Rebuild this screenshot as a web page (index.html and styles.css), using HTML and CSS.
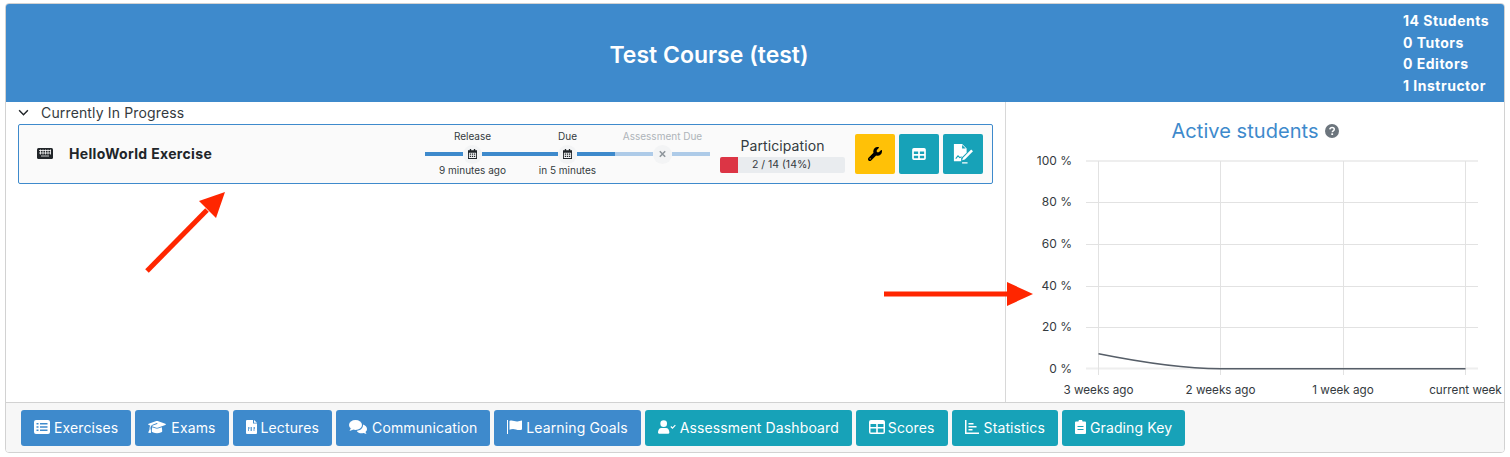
FILE: index.html
```html
<!DOCTYPE html>
<html lang="en">
<head>
    <meta charset="UTF-8">
    <title>Test Course (test)</title>
    <link rel="stylesheet" href="styles.css">
</head>
<body>

    <div class="course-card">
        <div class="course-header">
            <h1 class="course-title">Test Course (test)</h1>
            <div class="course-counts">
                <div>14 Students</div>
                <div>0 Tutors</div>
                <div>0 Editors</div>
                <div>1 Instructor</div>
            </div>
        </div>

        <div class="course-body">
            <div class="exercise-col">
                <div class="section-head">
                    <svg class="chevron" viewBox="0 0 12 8"><path d="M1 1.5l5 5 5-5" fill="none" stroke="#212529" stroke-width="1.7"/></svg>
                    <span>Currently In Progress</span>
                </div>
                <div class="exercise-row">
                    <svg class="keyboard" viewBox="0 0 16 11">
                        <rect x="0" y="0" width="16" height="11" rx="1.5" fill="#212529"/>
                        <path d="M2 2.5h12M2 5h12M4 8h8M3.5 1.5v5M6 1.5v5M8.5 1.5v5M11 1.5v5M13.5 1.5v5" stroke="#fafafa" stroke-width=".8"/>
                    </svg>
                    <div class="exercise-name">HelloWorld Exercise</div>

                    <div class="timeline">
                        <div class="tl-labels">
                            <span class="tl-cell">Release</span>
                            <span class="tl-cell">Due</span>
                            <span class="tl-cell muted">Assessment Due</span>
                        </div>
                        <div class="tl-track">
                            <span class="tl-seg done first"></span>
                            <span class="tl-dot"><svg viewBox="0 0 10 11"><path d="M2 0h1.5v1.2h3V0H8v1.2h2V11H0V1.2h2zM1 4v6h8V4zM2 5h1.4v1.2H2zM4.300 5h1.400v1.200H4.300zM6.600 5H8v1.200H6.600zM2 7.500h1.400v1.200H2zM4.300 7.500h1.400v1.200H4.300zM6.600 7.500H8v1.200H6.600z" fill="#212529" fill-rule="evenodd"/></svg></span>
                            <span class="tl-seg done middle"></span>
                            <span class="tl-dot"><svg viewBox="0 0 10 11"><path d="M2 0h1.5v1.2h3V0H8v1.2h2V11H0V1.2h2zM1 4v6h8V4zM2 5h1.400v1.200H2zM4.300 5h1.400v1.200H4.300zM6.600 5H8v1.200H6.600zM2 7.500h1.400v1.200H2zM4.300 7.500h1.400v1.200H4.300zM6.600 7.500H8v1.200H6.600z" fill="#212529" fill-rule="evenodd"/></svg></span>
                            <span class="tl-seg split"></span>
                            <span class="tl-dot"><svg viewBox="0 0 10 10"><path d="M2 2l6 6M8 2l-6 6" stroke="#8f969c" stroke-width="1.800"/></svg></span>
                            <span class="tl-seg faded last"></span>
                        </div>
                        <div class="tl-labels">
                            <span class="tl-cell">9 minutes ago</span>
                            <span class="tl-cell">in 5 minutes</span>
                            <span class="tl-cell"></span>
                        </div>
                    </div>

                    <div class="participation">
                        <div class="part-title">Participation</div>
                        <div class="part-bar">
                            <div class="part-fill"></div>
                            <div class="part-text">2 / 14 (14%)</div>
                        </div>
                    </div>

                    <div class="row-actions">
                        <a class="square-btn yellow"><svg viewBox="0 0 512 512" class="ic-wrench"><path fill="#000" d="M352 320c88.400 0 160-71.600 160-160c0-15.300-2.200-30.100-6.200-44.200c-3.100-10.800-16.400-13.200-24.300-5.300l-76.800 76.800c-3 3-7.100 4.700-11.300 4.700H336c-8.800 0-16-7.200-16-16V118.600c0-4.200 1.700-8.300 4.700-11.300l76.800-76.800c7.900-7.900 5.400-21.200-5.300-24.300C382.100 2.200 367.300 0 352 0C263.600 0 192 71.600 192 160c0 19.100 3.400 37.500 9.500 54.500L19.900 396.100C7.200 408.800 0 426.100 0 444.100C0 481.600 30.400 512 67.900 512c18 0 35.300-7.200 48-19.900L297.500 310.500c17 6.200 35.400 9.500 54.500 9.500zM80 408a24 24 0 1 1 0 48 24 24 0 1 1 0-48z" fill-rule="evenodd"/></svg></a>
                        <a class="square-btn teal"><svg viewBox="0 0 16 14" class="ic-table"><path fill="#fff" fill-rule="evenodd" d="M2 0h12a2 2 0 0 1 2 2v10a2 2 0 0 1-2 2H2a2 2 0 0 1-2-2V2a2 2 0 0 1 2-2zM2 4v3h5V4zM9 4v3h5V4zM2 9v3h5V9zM9 9v3h5V9z"/></svg></a>
                        <a class="square-btn teal"><svg viewBox="0 0 22 22" class="ic-grade"><path fill="#fff" d="M1 0h9l5 5v4.500L9 15.500V19H1zM10 1v4h4z"/><path fill="#fff" d="M20 6l2 2-9 9-3 1 1-3z"/><path fill="none" stroke="#17a2b8" stroke-width="1.200" d="M3 16l2.500-3 2 2 2-1"/><path fill="#fff" d="M10 20h6v1.500H10z"/></svg></a>
                    </div>
                </div>
            </div>

            <div class="chart-col">
                <div class="chart-title">
                    <span>Active students</span>
                    <svg class="help" viewBox="0 0 14 14"><circle cx="7" cy="7" r="7" fill="#6c757d"/><path d="M4.800 5.400C5 4 6 3.400 7.100 3.400c1.300 0 2.200.8 2.200 1.900 0 1.700-2 1.600-2 3" fill="none" stroke="#fff" stroke-width="1.500"/><rect x="6.300" y="9.300" width="1.800" height="1.700" fill="#fff"/></svg>
                </div>
                <svg class="chart" width="499" height="253" viewBox="1006 150 499 253">
                    <g stroke="#e2e2e2" stroke-width="1">
                        <path d="M1086 161H1478" stroke-width="2" stroke="#eeeeee"/>
                        <path d="M1086 202.500H1478M1086 244.500H1478M1086 286.500H1478M1086 327.500H1478"/>
                        <path d="M1086 368.500H1478" stroke-width="2" stroke="#eeeeee"/>
                        <path d="M1098.500 161V375M1220.500 161V375M1343.500 161V375M1465.500 161V375"/>
                    </g>
                    <path d="M1098.500 353.700C1140 362 1180 368.500 1220.500 368.800H1465.500" fill="none" stroke="#565e68" stroke-width="1.500"/>
                    <g class="chart-y" text-anchor="end">
                        <text x="1072" y="165">100 %</text>
                        <text x="1072" y="206">80 %</text>
                        <text x="1072" y="248">60 %</text>
                        <text x="1072" y="290">40 %</text>
                        <text x="1072" y="331">20 %</text>
                        <text x="1072" y="373">0 %</text>
                    </g>
                    <g class="chart-x" text-anchor="middle">
                        <text x="1098.500" y="394">3 weeks ago</text>
                        <text x="1220.500" y="394">2 weeks ago</text>
                        <text x="1343" y="394">1 week ago</text>
                        <text x="1465.500" y="394">current week</text>
                    </g>
                </svg>
            </div>
        </div>

        <div class="course-footer">
            <a class="nav-btn blue"><svg class="nav-ic" viewBox="0 0 16 14"><path fill="#fff" fill-rule="evenodd" d="M2 0h12a2 2 0 0 1 2 2v10a2 2 0 0 1-2 2H2a2 2 0 0 1-2-2V2a2 2 0 0 1 2-2zM2.500 3v1.600h2V3zM6 3v1.600h7.500V3zM2.500 6.200v1.600h2V6.200zM6 6.200v1.600h7.500V6.200zM2.500 9.400V11h2V9.400zM6 9.400V11h7.500V9.400z"/></svg>Exercises</a>
            <a class="nav-btn blue"><svg class="nav-ic cap" viewBox="0 0 640 512"><path fill="#fff" d="M320 32c-8.100 0-16.100 1.400-23.700 4.100L15.800 137.400C6.300 140.900 0 149.900 0 160s6.300 19.100 15.800 22.600l57.900 20.900C57.300 229.300 48 259.800 48 291.900v28.100c0 28.400-10.800 57.700-22.300 80.800c-6.500 13-13.900 25.800-22.500 37.600C0 442.700-.9 448.300 .9 453.400s6 8.900 11.200 10.200l64 16c4.200 1.100 8.700 .3 12.400-2s6.300-6.100 7.100-10.400c8.600-42.800 4.300-81.200-2.100-108.700C90.300 344.300 86 329.800 80 316.500V291.900c0-30.200 10.200-58.700 27.900-81.500c12.900-15.500 29.600-28 49.200-35.700l157-61.700c8.200-3.200 17.500 .8 20.700 9s-.8 17.500-9 20.700l-157 61.700c-12.400 4.900-23.300 12.400-32.200 21.600l159.600 57.600c7.600 2.700 15.600 4.100 23.700 4.100s16.100-1.400 23.700-4.100L624.200 182.600c9.500-3.400 15.800-12.500 15.800-22.600s-6.300-19.100-15.800-22.600L343.700 36.100C336.100 33.400 328.100 32 320 32zM128 408c0 35.300 86 72 192 72s192-36.700 192-72L496.700 262.600 354.500 314c-11.100 4-22.800 6-34.500 6s-23.500-2-34.500-6L143.300 262.600 128 408z"/></svg>Exams</a>
            <a class="nav-btn blue"><svg class="nav-ic pdf" viewBox="0 0 11 14"><path fill="#fff" d="M1 0h6v3.500h4V13a1 1 0 0 1-1 1H1a1 1 0 0 1-1-1V1a1 1 0 0 1 1-1zM8 0l3 2.800H8z"/><path d="M2 8h1.500M4.500 8h1.500M7.500 8H9M2 10h1M4.500 10h1.500M7.500 10h1" stroke="#3e8acc" stroke-width="1.500"/></svg>Lectures</a>
            <a class="nav-btn blue"><svg class="nav-ic talk" viewBox="0 0 18 14"><ellipse cx="6.500" cy="5" rx="6.500" ry="5" fill="#fff"/><path fill="#fff" d="M2 8l-1.500 3 4-1.500z"/><path fill="#fff" d="M14 4.600c2.300.7 4 2.400 4 4.400 0 1.200-.6 2.200-1.500 3l1 2-3-1c-2.700.7-5.600-.1-6.700-2.100 3.500-.2 6.500-2.700 6.200-6.300z"/></svg>Communication</a>
            <a class="nav-btn blue"><svg class="nav-ic flag" viewBox="0 0 15 14"><path fill="#fff" d="M0 0h1v14H0zM2.500 1c3-1.500 5.500 1.300 9 .3L15 .5v9c-3.500 1.500-6.500-.5-9-.5-1.300 0-2.500.3-3.500.8z"/></svg>Learning Goals</a>
            <a class="nav-btn teal"><svg class="nav-ic person" viewBox="0 0 19 14"><circle cx="6" cy="3.500" r="3.500" fill="#fff"/><path fill="#fff" d="M3.500 8h5c2 0 3.500 2 3.500 4.800 0 .7-.5 1.200-1 1.200H1c-.5 0-1-.5-1-1.200C0 10 1.500 8 3.500 8z"/><path d="M13.500 6.500l1.800 1.800 3-3.300" fill="none" stroke="#fff" stroke-width="1.200"/></svg>Assessment Dashboard</a>
            <a class="nav-btn teal"><svg class="nav-ic grid" viewBox="0 0 16 14"><path fill="#fff" fill-rule="evenodd" d="M2 0h12a2 2 0 0 1 2 2v10a2 2 0 0 1-2 2H2a2 2 0 0 1-2-2V2a2 2 0 0 1 2-2zM1.500 4v3h5.700V4zM8.800 4v3h5.700V4zM1.500 8.500v4h5.700v-4zM8.800 8.500v4h5.700v-4z"/></svg>Scores</a>
            <a class="nav-btn teal"><svg class="nav-ic chartline" viewBox="0 0 14 14"><path fill="#fff" d="M0 0h1.500v12.500H14V14H0zM3.500 3h5v1.500h-5zM3.500 6h8v1.500h-8zM3.500 9h4v1.500h-4z"/></svg>Statistics</a>
            <a class="nav-btn teal"><svg class="nav-ic clip" viewBox="0 0 11 14"><path fill="#fff" d="M3.500 1.500a2 2 0 0 1 4 0H10a1 1 0 0 1 1 1V13a1 1 0 0 1-1 1H1a1 1 0 0 1-1-1V2.500a1 1 0 0 1 1-1zM2.500 6v1h6V6zM2.500 9v1h6V9z" fill-rule="evenodd"/></svg>Grading Key</a>
        </div>
    </div>

    <!-- red annotation arrows -->
    <svg class="arrow arrow-left" width="90" height="90" viewBox="0 0 90 90"><path d="M4 81L64 20" stroke="#ff2600" stroke-width="5" fill="none"/><path d="M82 2L56 11 73 28z" fill="#ff2600"/></svg>
    <svg class="arrow arrow-right" width="152" height="28" viewBox="0 0 152 28"><path d="M1 14H128" stroke="#ff2600" stroke-width="5" fill="none"/><path d="M150 14L124 2V26z" fill="#ff2600"/></svg>

</body>
</html>
```

FILE: styles.css
```css
body {
    margin: 0;
    font-family: Inter, "Noto Sans", sans-serif;
    color: #212529;
    background-color: #fff;
    font-size: 14px;
}

a {
    text-decoration: none;
}

.course-card {
    margin: 3px 5px 0 5px;
    width: 1500px;
    height: 450px;
    box-sizing: border-box;
    border: 1px solid #d2d2d2;
    border-radius: 4px;
    display: flex;
    flex-direction: column;
    overflow: hidden;
}

.course-header {
    height: 98px;
    background-color: #3e8acc;
    color: #fff;
    display: flex;
    align-items: center;
    justify-content: center;
    position: relative;
    flex-shrink: 0;
}

.course-title {
    margin: 0;
    font-size: 23px;
    font-weight: 600;
    line-height: 1;
    padding-right: 92px;
    padding-top: 4px;
}

.course-counts {
    position: absolute;
    right: 14px;
    top: 6px;
    font-weight: 700;
    font-size: 14px;
    letter-spacing: .5px;
    line-height: 21.700px;
    width: 87px;
    white-space: nowrap;
}

.course-body {
    flex: 1;
    display: flex;
    min-height: 0;
}

.exercise-col {
    border-right: 1px solid #d8d8d8;
    padding: 0 12px;
    flex-shrink: 0;
    width: 975px;
}

.section-head {
    display: flex;
    align-items: center;
    height: 22px;
    padding-bottom: 2px;
    box-sizing: border-box;
    font-size: 14px;
    letter-spacing: .15px;
    color: #343a40;
}

.chevron {
    width: 11px;
    height: 7px;
    margin-right: 12px;
}

.exercise-row {
    height: 60px;
    box-sizing: border-box;
    border: 1px solid #3e8acc;
    border-radius: 2px;
    background-color: #fafafa;
    display: flex;
    align-items: center;
    padding-left: 18px;
}

.keyboard {
    width: 16px;
    height: 11px;
    flex-shrink: 0;
    margin-bottom: 2px;
}

.exercise-name {
    margin-left: 16px;
    margin-bottom: 2px;
    width: 356px;
    font-weight: 700;
    font-size: 14px;
    letter-spacing: .33px;
    white-space: nowrap;
}

.timeline {
    width: 285px;
    flex-shrink: 0;
    font-size: 10px;
    color: #343a40;
}

.tl-labels {
    display: flex;
    height: 14px;
    line-height: 10px;
}

.tl-labels:last-child {
    line-height: 12px;
}

.tl-cell {
    width: 95px;
    text-align: center;
    white-space: nowrap;
}

.muted {
    color: #aeb4b9;
}

.tl-track {
    display: flex;
    align-items: center;
    height: 19px;
}

.tl-seg {
    height: 4px;
}

.first {
    width: 38px;
}

.middle {
    width: 76px;
}

.split {
    width: 76px;
    background: linear-gradient(to right, #3e8acc 50%, #aecbe8 50%);
}

.last {
    width: 38px;
}

.done {
    background-color: #3e8acc;
}

.faded {
    background-color: #aecbe8;
}

.tl-dot {
    width: 19px;
    height: 19px;
    border-radius: 50%;
    background-color: #f3f4f5;
    display: flex;
    align-items: center;
    justify-content: center;
    flex-shrink: 0;
}

.tl-dot svg {
    width: 9px;
    height: 10px;
}

.participation {
    width: 125px;
    margin-left: 10px;
    margin-top: 2px;
    flex-shrink: 0;
}

.part-title {
    text-align: center;
    font-size: 14px;
    letter-spacing: .1px;
    line-height: 17px;
    margin-bottom: 3px;
    color: #343a40;
}

.part-bar {
    height: 16px;
    background-color: #e9ecef;
    border-radius: 2px;
    display: flex;
    overflow: hidden;
}

.part-fill {
    width: 18px;
    background-color: #dc3545;
}

.part-text {
    flex: 1;
    text-align: center;
    font-size: 10.500px;
    line-height: 16px;
    padding-right: 20px;
    color: #343a40;
}

.row-actions {
    display: flex;
    gap: 4px;
    margin-left: 10px;
}

.square-btn {
    width: 40px;
    height: 40px;
    border-radius: 2px;
    display: flex;
    align-items: center;
    justify-content: center;
}

.square-btn.yellow {
    background-color: #ffc107;
}

.square-btn.teal {
    background-color: #17a2b8;
}

.ic-wrench {
    width: 14px;
    height: 14px;
}

.ic-table {
    width: 14px;
    height: 12px;
}

.ic-grade {
    width: 20px;
    height: 20px;
}

.chart-col {
    flex: 1;
    min-width: 0;
    display: flex;
    flex-direction: column;
}

.chart-title {
    height: 48px;
    display: flex;
    align-items: center;
    justify-content: center;
    gap: 6px;
    color: #3e8acc;
    font-size: 20px;
    letter-spacing: .05px;
    padding-top: 10px;
    box-sizing: border-box;
    flex-shrink: 0;
}

.help {
    width: 14px;
    height: 14px;
}

.chart {
    display: block;
    flex-shrink: 0;
    font-size: 12px;
    fill: #343a40;
}

.chart-x {
    font-size: 11.700px;
}

.course-footer {
    height: 50px;
    flex-shrink: 0;
    box-sizing: border-box;
    background-color: #f7f7f7;
    border-top: 1px solid #d2d2d2;
    padding: 7px 15px 0 15px;
    display: flex;
    gap: 4px;
}

.nav-btn {
    height: 36px;
    box-sizing: border-box;
    border-radius: 3px;
    color: #fff;
    font-size: 14px;
    letter-spacing: .12px;
    display: flex;
    align-items: center;
    padding: 0 13px 2px 13px;
    white-space: nowrap;
}

.nav-btn.blue {
    background-color: #3e8acc;
}

.nav-btn.teal {
    background-color: #17a2b8;
}

.nav-ic {
    width: 16px;
    height: 14px;
    margin-right: 4px;
    flex-shrink: 0;
}

.nav-ic.cap {
    width: 18px;
    margin-right: 5px;
}

.nav-ic.pdf {
    width: 11px;
}

.nav-ic.talk {
    width: 18px;
    margin-right: 5px;
}

.nav-ic.flag {
    width: 15px;
}

.nav-ic.person {
    width: 18px;
}

.nav-ic.grid {
    margin-right: 3px;
}

.nav-ic.chartline {
    width: 14px;
    margin-right: 5px;
}

.nav-ic.clip {
    width: 11px;
}

.arrow {
    position: absolute;
}

.arrow-left {
    left: 143px;
    top: 190px;
}

.arrow-right {
    left: 883px;
    top: 280px;
}
```
